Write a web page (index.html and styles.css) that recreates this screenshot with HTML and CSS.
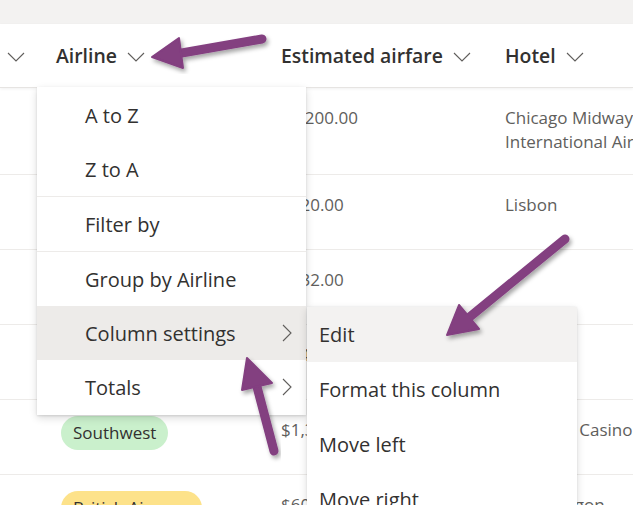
FILE: index.html
```html
<!DOCTYPE html>
<html lang="en">
<head>
<meta charset="utf-8">
<title>List view – Airline column menu</title>
<link rel="stylesheet" href="styles.css">
</head>
<body>
<div class="page">
  <div class="topbar"></div>
  <div class="header">
    <div class="hcell hcell-first">
      <svg class="chev-down" viewBox="0 0 18 10"><path d="M1 1 L9 9 L17 1"/></svg>
    </div>
    <div class="hcell hcell-airline"><span class="htext">Airline</span><svg class="chev-down" viewBox="0 0 18 10"><path d="M1 1 L9 9 L17 1"/></svg></div>
    <div class="hcell hcell-fare"><span class="htext">Estimated airfare</span><svg class="chev-down" viewBox="0 0 18 10"><path d="M1 1 L9 9 L17 1"/></svg></div>
    <div class="hcell hcell-hotel"><span class="htext">Hotel</span><svg class="chev-down" viewBox="0 0 18 10"><path d="M1 1 L9 9 L17 1"/></svg></div>
  </div>

  <div class="rows">
    <div class="row row-tall">
      <div class="cell c0"></div>
      <div class="cell c1"></div>
      <div class="cell c2">$1,200.00</div>
      <div class="cell c3 wrap">Chicago Midway International Airport</div>
    </div>
    <div class="row">
      <div class="cell c0"></div>
      <div class="cell c1"></div>
      <div class="cell c2">$820.00</div>
      <div class="cell c3">Lisbon</div>
    </div>
    <div class="row">
      <div class="cell c0"></div>
      <div class="cell c1"></div>
      <div class="cell c2">$532.00</div>
      <div class="cell c3"></div>
    </div>
    <div class="row">
      <div class="cell c0"></div>
      <div class="cell c1"></div>
      <div class="cell c2">$940.00</div>
      <div class="cell c3"></div>
    </div>
    <div class="row">
      <div class="cell c0"></div>
      <div class="cell c1"><span class="pill pill-green">Southwest</span></div>
      <div class="cell c2">$1,350.00</div>
      <div class="cell c3">Venetian Casino</div>
    </div>
    <div class="row">
      <div class="cell c0"></div>
      <div class="cell c1"><span class="pill pill-yellow">British Airways</span></div>
      <div class="cell c2">$600.00</div>
      <div class="cell c3">The Paragon</div>
    </div>
  </div>

  <div class="menu">
    <div class="mitem">A to Z</div>
    <div class="mitem">Z to A</div>
    <div class="mdivider"></div>
    <div class="mitem">Filter by</div>
    <div class="mdivider"></div>
    <div class="mitem">Group by Airline</div>
    <div class="mitem mitem-active">Column settings<svg class="chev-right" viewBox="0 0 10 18"><path d="M1 1 L9 9 L1 17"/></svg></div>
    <div class="mitem">Totals<svg class="chev-right" viewBox="0 0 10 18"><path d="M1 1 L9 9 L1 17"/></svg></div>
  </div>

  <div class="submenu">
    <div class="sitem sitem-active">Edit</div>
    <div class="sitem">Format this column</div>
    <div class="sitem">Move left</div>
    <div class="sitem">Move right</div>
  </div>

  <svg class="arrows" viewBox="0 0 633 505" width="633" height="505">
    <defs>
      <filter id="shadow" x="-20%" y="-20%" width="140%" height="140%">
        <feDropShadow dx="2" dy="3" stdDeviation="2" flood-color="#000" flood-opacity="0.35"/>
      </filter>
    </defs>
    <g class="arrow" filter="url(#shadow)">
      <line x1="262" y1="39" x2="176" y2="54"/>
      <polygon points="152,57 179,38 183,68"/>
    </g>
    <g class="arrow" filter="url(#shadow)">
      <line x1="565" y1="239" x2="466" y2="320"/>
      <polygon points="447,335 459,305 479,329"/>
    </g>
    <g class="arrow" filter="url(#shadow)">
      <line x1="274" y1="451" x2="256" y2="383"/>
      <polygon points="247,358 242,390 272,383"/>
    </g>
  </svg>
</div>
</body>
</html>
```

FILE: styles.css
```css
* { box-sizing: border-box; }

html, body {
  margin: 0;
  padding: 0;
  background: #ffffff;
}

body {
  font-family: "Open Sans", "Noto Sans", "Liberation Sans", sans-serif;
  color: #323130;
  overflow: hidden;
}

.page {
  position: relative;
  width: 633px;
  height: 505px;
  overflow: hidden;
}

.topbar {
  height: 24px;
  background: #f3f2f1;
}

.header {
  display: flex;
  align-items: center;
  height: 64px;
  background: #ffffff;
  border-bottom: 1px solid #e6e4e2;
  box-shadow: 0 1px 3px rgba(0, 0, 0, 0.06);
  position: relative;
  z-index: 1;
}

.hcell {
  display: flex;
  align-items: center;
  gap: 10px;
  flex: none;
  white-space: nowrap;
}

.hcell-first { width: 44px; padding-left: 7px; }
.hcell-airline { width: 225px; padding-left: 12px; }
.hcell-fare { width: 224px; padding-left: 12px; }
.hcell-hotel { width: 200px; padding-left: 12px; }

.htext {
  font-size: 19.4px;
  font-weight: 600;
  color: #323130;
}

.chev-down {
  width: 18px;
  height: 10px;
  fill: none;
  stroke: #605e5c;
  stroke-width: 1.1;
  margin-top: 2px;
}

.rows {
  display: flex;
  flex-direction: column;
}

.row {
  display: flex;
  height: 75px;
  border-bottom: 1px solid #edebe9;
}

.row-tall { height: 87px; }

.cell {
  flex: none;
  font-size: 17px;
  line-height: 24px;
  color: #605e5c;
  padding-top: 18px;
  white-space: nowrap;
}

.c0 { width: 44px; }
.c1 { width: 225px; padding-left: 17px; padding-top: 16px; }
.c2 { width: 224px; padding-left: 12px; }
.c3 { width: 200px; padding-left: 12px; }
.c3.wrap { white-space: normal; }

.pill {
  display: inline-block;
  height: 34px;
  line-height: 34px;
  padding: 0 12px;
  border-radius: 17px;
  font-size: 17px;
  color: #323130;
}

.pill-green { background: #caf0cc; }
.pill-yellow { background: #fde28a; }

.menu {
  position: absolute;
  left: 37px;
  top: 87px;
  width: 269px;
  padding: 1px 0;
  background: #ffffff;
  box-shadow: 0 3px 8px rgba(0, 0, 0, 0.14), 0 0.6px 2px rgba(0, 0, 0, 0.11);
  z-index: 2;
}

.mitem {
  display: flex;
  align-items: center;
  height: 54px;
  padding: 0 14px 0 48px;
  font-size: 20px;
  color: #323130;
  white-space: nowrap;
}

.mitem-active { background: #edebe9; }

.mdivider {
  height: 1px;
  background: #edebe9;
}

.chev-right {
  width: 10px;
  height: 18px;
  margin-left: auto;
  fill: none;
  stroke: #605e5c;
  stroke-width: 1.1;
}

.submenu {
  position: absolute;
  left: 307px;
  top: 307px;
  width: 270px;
  background: #ffffff;
  box-shadow: 0 3px 8px rgba(0, 0, 0, 0.14), 0 0.6px 2px rgba(0, 0, 0, 0.11);
  border-radius: 2px;
  z-index: 3;
}

.sitem {
  display: flex;
  align-items: center;
  height: 55px;
  padding-left: 12px;
  font-size: 20px;
  color: #323130;
  white-space: nowrap;
}

.sitem-active { background: #f3f2f1; }

.arrows {
  position: absolute;
  left: 0;
  top: 0;
  z-index: 4;
  pointer-events: none;
}

.arrow line {
  stroke: #833f80;
  stroke-width: 9;
  stroke-linecap: round;
}

.arrow polygon {
  fill: #833f80;
  stroke: #833f80;
  stroke-width: 2;
  stroke-linejoin: round;
}
```
